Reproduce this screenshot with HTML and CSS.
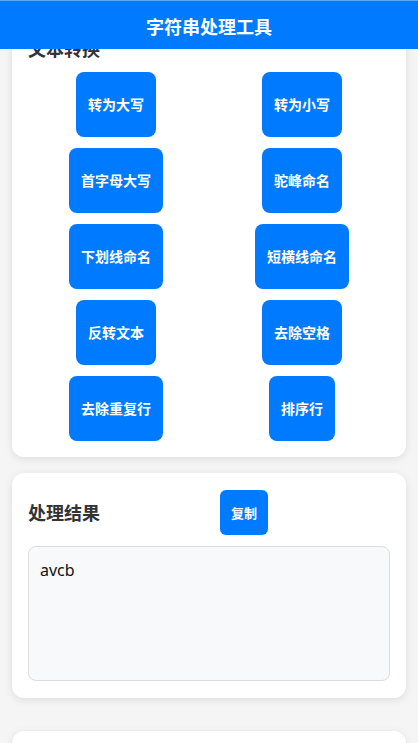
FILE: index.html
```html
<!DOCTYPE html>
<html lang="zh-CN">
<head>
<meta charset="utf-8">
<meta name="viewport" content="width=device-width, initial-scale=1">
<title>字符串处理工具</title>
<link rel="stylesheet" href="styles.css">
</head>
<body>
<header class="app-header">字符串处理工具</header>
<main class="content">
  <section class="card card-convert">
    <h2 class="card-title">文本转换</h2>
    <div class="btn-grid">
      <button class="btn">转为大写</button>
      <button class="btn">转为小写</button>
      <button class="btn">首字母大写</button>
      <button class="btn">驼峰命名</button>
      <button class="btn">下划线命名</button>
      <button class="btn">短横线命名</button>
      <button class="btn">反转文本</button>
      <button class="btn">去除空格</button>
      <button class="btn">去除重复行</button>
      <button class="btn">排序行</button>
    </div>
  </section>
  <section class="card card-result">
    <div class="result-head">
      <h2 class="card-title result-title">处理结果</h2>
      <button class="btn btn-copy">复制</button>
    </div>
    <textarea class="result-box" readonly>avcb</textarea>
  </section>
  <section class="card card-next"></section>
</main>
</body>
</html>
```
FILE: styles.css
```css
* { box-sizing: border-box; }
html, body { margin: 0; padding: 0; }
body {
  background: #f5f5f5;
  font-family: "Noto Sans", "Noto Sans CJK SC", sans-serif;
  color: #333;
  overflow: hidden;
  height: 743px;
}
.app-header {
  position: fixed;
  top: 0;
  left: 0;
  right: 0;
  height: 49px;
  background: #007aff;
  border-top: 1px solid #5aa8ff;
  color: #fff;
  font-size: 18px;
  font-weight: 700;
  display: flex;
  align-items: center;
  justify-content: center;
  z-index: 10;
  padding-top: 2px;
}
.content {
  padding: 21px 12px 0;
}
.card {
  background: #fff;
  border-radius: 12px;
  box-shadow: 0 2px 8px rgba(0, 0, 0, 0.1);
  padding: 16px;
}
.card-title {
  margin: 0;
  font-size: 18px;
  line-height: 24px;
  font-weight: 700;
  color: #333;
}
.card-convert .card-title { margin-bottom: 11px; }
.btn-grid {
  display: grid;
  grid-template-columns: 1fr 1fr;
  column-gap: 10px;
  row-gap: 11px;
  justify-items: center;
}
.btn {
  font-family: "Noto Sans", "Noto Sans CJK SC", sans-serif;
  background: #007aff;
  color: #fff;
  border: none;
  border-radius: 8px;
  font-size: 14px;
  font-weight: 700;
  height: 65px;
  padding: 0 12px;
  line-height: 20px;
}
.card-result {
  margin-top: 16px;
  padding: 17px 16px 17px;
}
.result-head {
  display: flex;
  align-items: center;
}
.result-title { width: 192px; }
.btn-copy {
  height: 45px;
  font-size: 13px;
  padding: 0 11px;
  border-radius: 6px;
}
.result-box {
  display: block;
  width: 100%;
  height: 135px;
  margin-top: 11px;
  background: #f8f9fa;
  border: 1px solid #dddddd;
  border-radius: 8px;
  padding: 11px 11px;
  font-family: "Noto Sans", "Noto Sans CJK SC", sans-serif;
  font-size: 16px;
  line-height: 1.5;
  color: #111;
  resize: none;
  outline: none;
}
.card-next {
  margin-top: 33px;
  height: 60px;
}
```
